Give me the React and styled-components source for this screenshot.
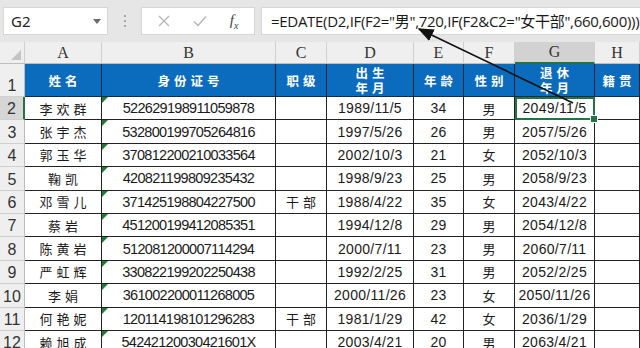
import React from 'react';
import styled, { createGlobalStyle } from 'styled-components';

const GlobalStyle = createGlobalStyle`
  html, body {
    margin: 0;
    padding: 0;
    background: #ffffff;
  }
  body {
    font-family: "Noto Sans", "Noto Sans CJK SC", sans-serif;
    overflow: hidden;
  }
`;

const Page = styled.div`
  position: relative;
  width: 640px;
  height: 348px;
  overflow: hidden;
  background: #ffffff;
`;

const FormulaBar = styled.div`
  display: flex;
  align-items: center;
  height: 42px;
  background: #e6e6e6;
  padding-left: 3px;
  box-sizing: border-box;
`;

const NameBox = styled.div`
  display: flex;
  align-items: center;
  justify-content: space-between;
  width: 105px;
  height: 28px;
  box-sizing: border-box;
  background: #ffffff;
  border: 1px solid #d6d6d6;
  padding: 0 6px 0 7px;
  font-size: 15px;
  color: #222;
`;

const Caret = styled.span`
  width: 0;
  height: 0;
  border-left: 4px solid transparent;
  border-right: 4px solid transparent;
  border-top: 5px solid #6a6a6a;
`;

const Grip = styled.div`
  display: flex;
  flex-direction: column;
  gap: 3px;
  margin: 0 15px 0 16px;
  span {
    width: 2px;
    height: 2px;
    background: #a8a8a8;
  }
`;

const ButtonGroup = styled.div`
  display: flex;
  align-items: center;
  justify-content: space-around;
  width: 114px;
  height: 28px;
  box-sizing: border-box;
  background: #ffffff;
  border: 1px solid #d6d6d6;
  padding: 0 4px;
  color: #b0b0b0;
`;

const FxLabel = styled.span`
  font-family: "Liberation Serif", serif;
  font-style: italic;
  font-size: 15px;
  color: #444;
`;

const FormulaBox = styled.div`
  flex: 1;
  height: 28px;
  margin-left: 6px;
  box-sizing: border-box;
  background: #ffffff;
  border: 1px solid #d6d6d6;
  border-right: none;
  padding-left: 9px;
  font-size: 15px;
  letter-spacing: -0.3px;
  line-height: 26px;
  white-space: nowrap;
  overflow: hidden;
  color: #1a1a1a;
  font-family: "Open Sans", "Noto Sans CJK SC", sans-serif;
`;

const Sheet = styled.div`
  display: grid;
  grid-template-columns: 25px 77px 174px 51px 87px 50px 51px 80px 45px;
  grid-template-rows: 22px 33px;
  grid-auto-rows: 23.4px;
`;

const ColHead = styled.div`
  display: flex;
  align-items: flex-end;
  justify-content: center;
  padding-bottom: 1px;
  box-sizing: border-box;
  background: ${(p) => (p.$active ? '#d2d2d2' : '#efefef')};
  border-right: 1px solid #d0d0d0;
  border-bottom: ${(p) => (p.$active ? '2px solid #217346' : '1px solid #bdbdbd')};
  font-family: "Liberation Serif", serif;
  font-size: 16px;
  color: #333;
`;

const Corner = styled.div`
  position: relative;
  background: #efefef;
  border-right: 1px solid #d0d0d0;
  border-bottom: 1px solid #bdbdbd;
  &::after {
    content: '';
    position: absolute;
    right: 3px;
    bottom: 3px;
    border-left: 10px solid transparent;
    border-bottom: 10px solid #c4c4c4;
  }
`;

const RowHead = styled.div`
  display: flex;
  align-items: flex-end;
  justify-content: center;
  box-sizing: border-box;
  background: ${(p) => (p.$active ? '#d6d6d6' : '#efefef')};
  border-right: ${(p) => (p.$active ? '2px solid #217346' : '1px solid #bdbdbd')};
  border-bottom: 1px solid #d0d0d0;
  font-family: "Liberation Sans", sans-serif;
  font-size: 16px;
  line-height: 20px;
  color: #333;
`;

const HeadCell = styled.div`
  display: flex;
  flex-direction: column;
  align-items: center;
  justify-content: center;
  box-sizing: border-box;
  background: #0b6cbd;
  border-right: 1px solid #1c2a3a;
  border-bottom: 1px solid #1c2a3a;
  color: #ffffff;
  font-family: "Noto Sans CJK SC", sans-serif;
  font-weight: 700;
  font-size: 12.5px;
  letter-spacing: 4px;
  line-height: 15px;
  padding-left: 4px;
  white-space: nowrap;
`;

const fontFor = (p) => {
  if (p.$cjk) return 'font-family: "Noto Sans CJK SC", sans-serif; font-size: 13px; letter-spacing: 4px; padding-left: 4px;';
  if (p.$id) return 'font-family: "Liberation Sans", sans-serif; font-size: 14.5px; letter-spacing: -0.7px;';
  return 'font-family: "Liberation Sans", sans-serif; font-size: 14px; letter-spacing: 0.3px;';
};

const Cell = styled.div`
  position: relative;
  display: flex;
  align-items: center;
  justify-content: center;
  box-sizing: border-box;
  border-right: 1px solid #222;
  border-bottom: 1px solid #222;
  ${fontFor}
  color: #1a1a1a;
  white-space: nowrap;
  ${(p) =>
    p.$id &&
    `&::before {
      content: '';
      position: absolute;
      left: 0;
      top: 0;
      border-right: 6px solid transparent;
      border-top: 6px solid #1f7a33;
    }`}
`;

const Selected = styled(Cell)`
  outline: 2px solid #217346;
  outline-offset: -2px;
  &::after {
    content: '';
    position: absolute;
    right: -4px;
    bottom: -4px;
    width: 6px;
    height: 6px;
    background: #217346;
    border: 1px solid #ffffff;
    z-index: 2;
  }
`;

const Arrow = styled.svg`
  position: absolute;
  left: 0;
  top: 0;
  pointer-events: none;
`;

const heads = [
  ['姓名'],
  ['身份证号'],
  ['职级'],
  ['出生', '年月'],
  ['年龄'],
  ['性别'],
  ['退休', '年月'],
  ['籍贯'],
];

const rows = [
  ['李欢群', '522629198911059878', '', '1989/11/5', '34', '男', '2049/11/5'],
  ['张宇杰', '532800199705264816', '', '1997/5/26', '26', '男', '2057/5/26'],
  ['郭玉华', '370812200210033564', '', '2002/10/3', '21', '女', '2052/10/3'],
  ['鞠凯', '420821199809235432', '', '1998/9/23', '25', '男', '2058/9/23'],
  ['邓雪儿', '371425198804227500', '干部', '1988/4/22', '35', '女', '2043/4/22'],
  ['蔡岩', '451200199412085351', '', '1994/12/8', '29', '男', '2054/12/8'],
  ['陈黄岩', '512081200007114294', '', '2000/7/11', '23', '男', '2060/7/11'],
  ['严虹辉', '330822199202250438', '', '1992/2/25', '31', '男', '2052/2/25'],
  ['李娟', '361002200011268005', '', '2000/11/26', '23', '女', '2050/11/26'],
  ['何艳妮', '120114198101296283', '干部', '1981/1/29', '42', '女', '2036/1/29'],
  ['赖旭成', '54242120030421601X', '', '2003/4/21', '20', '男', '2063/4/21'],
];

const cjkCols = [0, 2, 5];

export default function App() {
  return (
    <Page>
      <GlobalStyle />
      <FormulaBar>
        <NameBox>
          G2
          <Caret />
        </NameBox>
        <Grip>
          <span />
          <span />
          <span />
        </Grip>
        <ButtonGroup>
          <svg width="12" height="12" viewBox="0 0 12 12">
            <path d="M1 1 L11 11 M11 1 L1 11" stroke="#b4b4b4" strokeWidth="1.3" fill="none" />
          </svg>
          <svg width="14" height="12" viewBox="0 0 14 12">
            <path d="M1 6.5 L5 10.5 L13 1.5" stroke="#b4b4b4" strokeWidth="1.3" fill="none" />
          </svg>
          <FxLabel>
            f<sub style={{ fontSize: 10 }}>x</sub>
          </FxLabel>
        </ButtonGroup>
        <FormulaBox>=EDATE(D2,IF(F2="男",720,IF(F2&amp;C2="女干部",660,600)))</FormulaBox>
      </FormulaBar>
      <Sheet>
        <Corner />
        {['A', 'B', 'C', 'D', 'E', 'F', 'G', 'H'].map((l) => (
          <ColHead key={l} $active={l === 'G'}>
            {l}
          </ColHead>
        ))}
        <RowHead>1</RowHead>
        {heads.map((h, i) => (
          <HeadCell key={i}>
            {h.map((t) => (
              <span key={t}>{t}</span>
            ))}
          </HeadCell>
        ))}
        {rows.map((r, ri) => (
          <React.Fragment key={ri}>
            <RowHead $active={ri === 0}>{ri + 2}</RowHead>
            {r.map((v, ci) => {
              const props = { $cjk: cjkCols.includes(ci), $id: ci === 1 };
              if (ri === 0 && ci === 6) {
                return (
                  <Selected key={ci} {...props}>
                    {v}
                  </Selected>
                );
              }
              return (
                <Cell key={ci} {...props}>
                  {v}
                </Cell>
              );
            })}
            <Cell />
          </React.Fragment>
        ))}
      </Sheet>
      <Arrow width="640" height="348">
        <defs>
          <marker id="head" markerWidth="10" markerHeight="8" refX="9" refY="4" orient="auto">
            <path d="M0 0 L10 4 L0 8 Z" fill="#111" />
          </marker>
        </defs>
        <line x1="573" y1="103" x2="419" y2="29" stroke="#111" strokeWidth="1.6" markerEnd="url(#head)" />
      </Arrow>
    </Page>
  );
}
